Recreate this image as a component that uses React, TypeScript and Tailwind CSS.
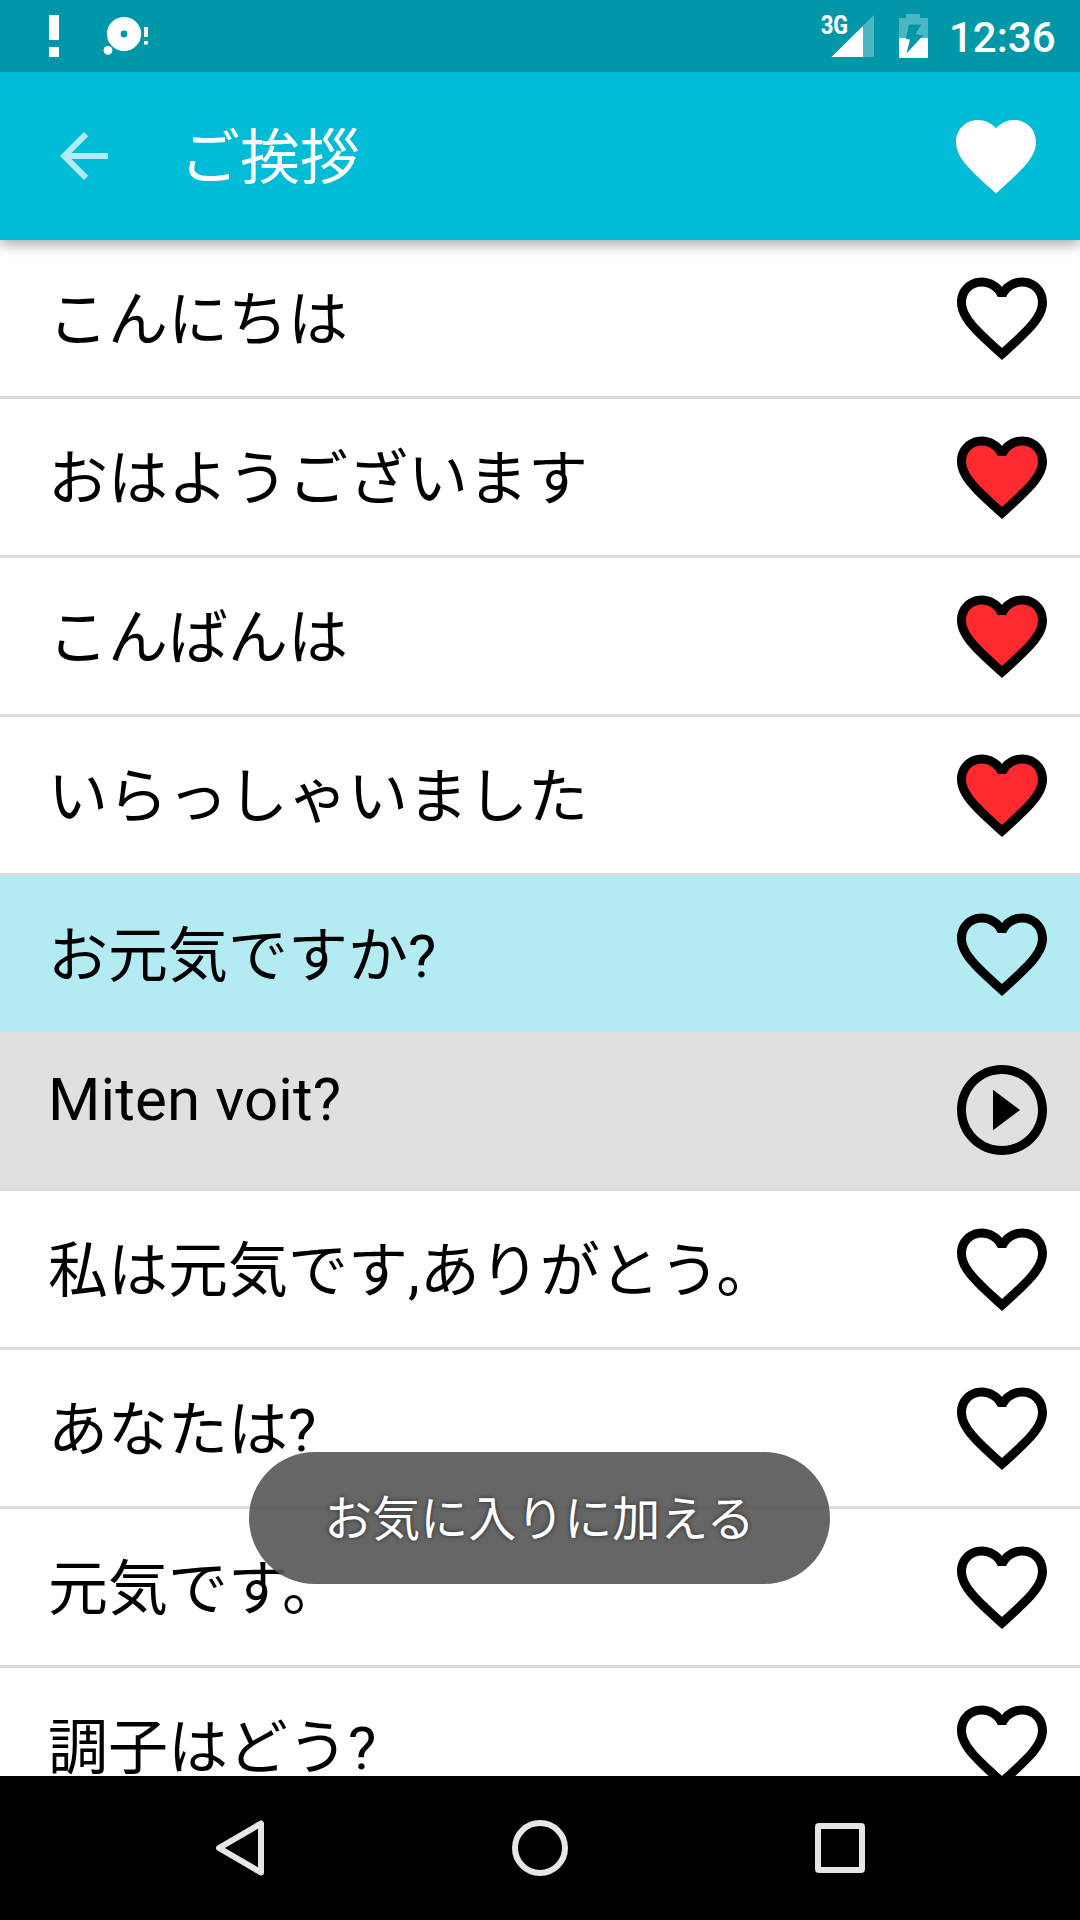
import React, { useState } from 'react';

interface Phrase {
  id: number;
  text: string;
  translation: string;
  favorite: boolean;
}

const initialPhrases: Phrase[] = [
  { id: 1, text: 'こんにちは', translation: 'Hei', favorite: false },
  { id: 2, text: 'おはようございます', translation: 'Huomenta', favorite: true },
  { id: 3, text: 'こんばんは', translation: 'Hyvää iltaa', favorite: true },
  { id: 4, text: 'いらっしゃいました', translation: 'Tervetuloa', favorite: true },
  { id: 5, text: 'お元気ですか?', translation: 'Miten voit?', favorite: false },
  { id: 6, text: '私は元気です,ありがとう。', translation: 'Minä voin hyvin, kiitos.', favorite: false },
  { id: 7, text: 'あなたは?', translation: 'Entä sinä?', favorite: false },
  { id: 8, text: '元気です。', translation: 'Hyvin.', favorite: false },
  { id: 9, text: '調子はどう?', translation: 'Mitä kuuluu?', favorite: false },
];

// ================= Icons =================
const HeartIcon: React.FC<{ filled: boolean }> = ({ filled }) => (
  <svg viewBox="0 0 24 24" className="size-[108px]">
    {filled && (
      <path
        className="fill-[#ff2a2f]"
        d="M12 20C7 15.4 3 12 3 8.5 3 6 5 4 7.5 4c1.7 0 3.5 1 4.5 2.5C13 5 14.8 4 16.5 4 19 4 21 6 21 8.5 21 12 17 15.4 12 20z"
      />
    )}
    <path d="M16.5 3c-1.74 0-3.41.81-4.5 2.09C10.91 3.81 9.24 3 7.5 3 4.42 3 2 5.42 2 8.5c0 3.78 3.4 6.86 8.55 11.54L12 21.35l1.45-1.32C18.6 15.36 22 12.28 22 8.5 22 5.42 19.58 3 16.5 3zm-4.4 15.55l-.1.1-.1-.1C7.14 14.24 4 11.39 4 8.5 4 6.5 5.5 5 7.5 5c1.54 0 3.04.99 3.57 2.36h1.87C13.46 5.99 14.96 5 16.5 5c2 0 3.5 1.5 3.5 3.5 0 2.89-3.14 5.74-7.9 10.05z" />
  </svg>
);

const PlayIcon = () => (
  <svg viewBox="0 0 24 24" className="size-[108px]">
    <path d="M10 16.5l6-4.5-6-4.5v9zM12 2C6.48 2 2 6.48 2 12s4.48 10 10 10 10-4.48 10-10S17.52 2 12 2zm0 18c-4.41 0-8-3.59-8-8s3.59-8 8-8 8 3.59 8 8-3.59 8-8 8z" />
  </svg>
);

// ================= Status Bar =================
const StatusBar = () => (
  <div className="z-20 flex h-[72px] shrink-0 items-center bg-[#0097a9] text-white">
    <svg viewBox="0 0 160 72" className="h-[72px] w-[160px] fill-white">
      <path d="M49 15h10v25H49zM49 47h10v10H49z" />
      <circle cx="124" cy="34" r="10.25" fill="none" stroke="white" strokeWidth="13.7" />
      <circle cx="108" cy="50.3" r="4.4" />
      <path d="M144 27h4v10h-4zM144 41h4v3.5h-4z" />
    </svg>
    <svg viewBox="815 0 120 72" className="ml-[655px] h-[72px] w-[120px] fill-white">
      <text x="821" y="33.5" className="stroke-white stroke-[0.2] text-[25px] font-bold" textLength="27" lengthAdjust="spacingAndGlyphs">3G</text>
      <path d="M874 15v42h-42.5z" opacity="0.3" />
      <path d="M863 26v31h-31.5z" />
      <path d="M906 14h14v4h8v20h-29V18h7z" opacity="0.3" />
      <path d="M899 38h29v20h-29z" />
      <path className="fill-[#0097a9]" d="M909 24.5h12l-5.5 10 8 .5-17 18.5 3.5-14-4.2-.5z" />
    </svg>
    <span className="ml-[14px] pt-1 text-[42px] leading-[72px] font-medium">12:36</span>
  </div>
);

// ================= App Bar =================
const AppBar: React.FC<{ title: string }> = ({ title }) => (
  <header className="z-10 flex h-[168px] shrink-0 items-center bg-[#00bcd6] pr-9 pl-12 text-white shadow-[0_5px_12px_rgba(0,0,0,0.32)]">
    <button aria-label="Back">
      <svg viewBox="0 0 24 24" className="size-[72px] fill-[#b2ebf2]">
        <path d="M20 11H7.83l5.59-5.59L12 4l-8 8 8 8 1.41-1.41L7.83 13H20v-2z" />
      </svg>
    </button>
    <h1 className="ml-[60px] flex-1 pt-1.5 text-[60px] leading-[80px]">{title}</h1>
    <button aria-label="Favorites">
      <svg viewBox="0 0 24 24" className="size-24 fill-white">
        <path d="M12 21.35l-1.45-1.32C5.4 15.36 2 12.28 2 8.5 2 5.42 4.42 3 7.5 3c1.74 0 3.41.81 4.5 2.09C13.09 3.81 14.76 3 16.5 3 19.58 3 22 5.42 22 8.5c0 3.78-3.4 6.86-8.55 11.54L12 21.35z" />
      </svg>
    </button>
  </header>
);

// ================= Navigation Bar =================
const NavBar = () => (
  <nav className="flex h-36 shrink-0 items-center justify-center gap-[228px] bg-black">
    <svg viewBox="0 0 72 72" className="size-[72px] fill-none stroke-[#e6e6e6] stroke-[6]">
      <path d="M57 11.5v49L15 36z" strokeLinejoin="round" />
    </svg>
    <svg viewBox="0 0 72 72" className="size-[72px] fill-none stroke-[#e6e6e6] stroke-[6]">
      <circle cx="36" cy="36" r="25" />
    </svg>
    <svg viewBox="0 0 72 72" className="size-[72px] fill-none stroke-[#e6e6e6] stroke-[6]">
      <rect x="14" y="14" width="44" height="44" rx="1" />
    </svg>
  </nav>
);

// ================= Main Component =================
export default function App() {
  const [phrases, setPhrases] = useState<Phrase[]>(initialPhrases);
  const [selectedId, setSelectedId] = useState(5);

  const toggleFavorite = (id: number) => {
    setPhrases((prev) => prev.map((p) => (p.id === id ? { ...p, favorite: !p.favorite } : p)));
  };

  return (
    <div className="relative flex h-[1920px] w-[1080px] flex-col overflow-hidden bg-white font-[Roboto,'Noto_Sans_CJK_JP',sans-serif] text-black">
      <StatusBar />
      <AppBar title="ご挨拶" />

      <main className="min-h-0 flex-1 overflow-hidden">
        {phrases.map((phrase) => {
          const isSelected = phrase.id === selectedId;
          return (
            <div key={phrase.id} className="border-b-[3px] border-[#dcdcdc] text-[60px] leading-[80px]">
              <div
                onClick={() => setSelectedId(phrase.id)}
                className={`flex h-[156px] items-center justify-between pr-6 pl-12 ${isSelected ? 'bg-[#b2ebf2]' : 'bg-white'}`}
              >
                <span className="pt-1.5">{phrase.text}</span>
                <button
                  aria-label="Toggle favorite"
                  onClick={(e) => { e.stopPropagation(); toggleFavorite(phrase.id); }}
                >
                  <HeartIcon filled={phrase.favorite} />
                </button>
              </div>
              {isSelected && (
                <div className="flex h-[156px] items-center justify-between bg-[#e0e0e0] pr-6 pl-12">
                  <span className="pb-5 tracking-[0.12px]">{phrase.translation}</span>
                  <button aria-label="Play">
                    <PlayIcon />
                  </button>
                </div>
              )}
            </div>
          );
        })}
      </main>

      {/* Toast */}
      <div className="absolute top-[1452px] left-[249px] z-20 flex h-[132px] w-[581px] items-center justify-center rounded-full bg-[#555555]/90 pt-1 text-[48px] text-white [text-shadow:0_0_5px_rgba(0,0,0,0.6)]">
        お気に入りに加える
      </div>

      <NavBar />
    </div>
  );
}
